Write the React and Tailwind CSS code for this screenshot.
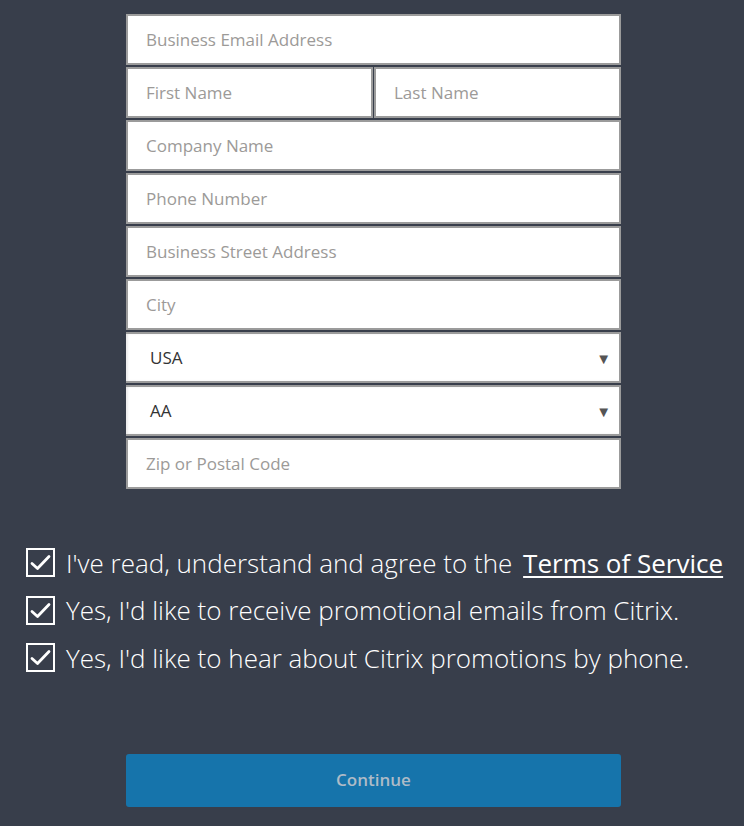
import React from 'react';

const fieldCls =
  "h-[51px] w-full bg-white border-2 border-[#9b9b9b] px-[18px] text-[17px] text-[#333] placeholder:text-[#9c9a98] outline-none";

function Field({ placeholder }) {
  return <input className={fieldCls} placeholder={placeholder} />;
}

function SelectBox({ value }) {
  return (
    <div className="relative h-[51px] w-full bg-white border-y-2 border-r-2 border-[#9b9b9b] shadow-[inset_2px_0_2px_rgba(0,0,0,0.08)] flex items-center pl-[24px] text-[17px] text-[#333]">
      <span>{value}</span>
      <span className="absolute right-[8px] top-1/2 -translate-y-1/2 text-[15px] text-[#555]">▼</span>
    </div>
  );
}

function Check({ children }) {
  return (
    <div className="flex items-center h-[47.5px]">
      <div className="w-[29px] h-[29px] border-2 border-white flex items-center justify-center shrink-0">
        <svg width="21" height="17" viewBox="0 0 21 17" fill="none">
          <path d="M2 9.5 L7.5 14.5 L19 2.5" stroke="white" strokeWidth="2.8" strokeLinecap="round" strokeLinejoin="round" />
        </svg>
      </div>
      <div className="ml-[11px] text-[26px] font-light text-white leading-none whitespace-nowrap">{children}</div>
    </div>
  );
}

export default function App() {
  return (
    <div className="w-[744px] h-[826px] bg-[#383e4b] overflow-hidden" style={{ fontFamily: '"Open Sans", "Noto Sans", sans-serif' }}>
      <div className="ml-[126px] w-[495px] pt-[14px] flex flex-col gap-[2px]">
        <Field placeholder="Business Email Address" />
        <div className="flex gap-[1px]">
          <input className={fieldCls + " flex-1 min-w-0"} placeholder="First Name" />
          <input className={fieldCls + " flex-1 min-w-0"} placeholder="Last Name" />
        </div>
        <Field placeholder="Company Name" />
        <Field placeholder="Phone Number" />
        <Field placeholder="Business Street Address" />
        <Field placeholder="City" />
        <SelectBox value="USA" />
        <SelectBox value="AA" />
        <Field placeholder="Zip or Postal Code" />
      </div>

      <div className="ml-[26px] mt-[50px] flex flex-col">
        <Check>
          I've read, understand and agree to the{" "}
          <a className="underline underline-offset-[3px] decoration-2 ml-[4px] font-normal" href="#">Terms of Service</a>
        </Check>
        <Check>Yes, I'd like to receive promotional emails from Citrix.</Check>
        <Check>Yes, I'd like to hear about Citrix promotions by phone.</Check>
      </div>

      <div className="ml-[126px] w-[495px] mt-[72px]">
        <button className="w-full h-[53px] rounded-[3px] bg-[#1674ab] text-[#aebbc7] text-[17px] font-semibold">
          Continue
        </button>
      </div>
    </div>
  );
}
